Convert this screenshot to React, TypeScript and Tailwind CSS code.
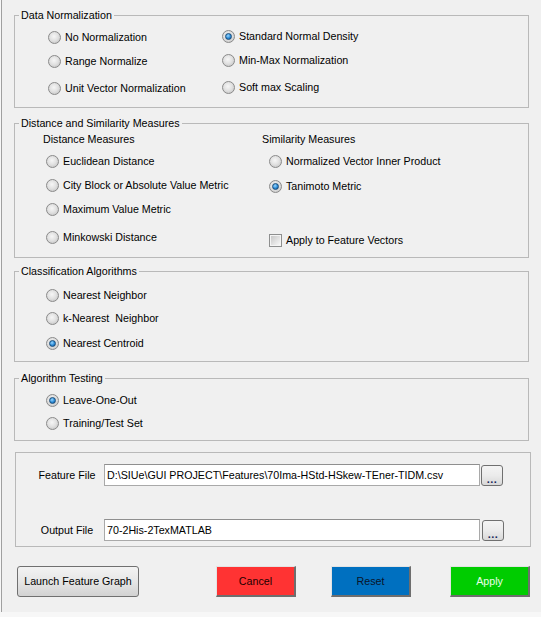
import React from "react";

function Radio({ checked = false }: { checked?: boolean }) {
  return (
    <span className="flex h-[13px] w-[13px] shrink-0 items-center justify-center rounded-full border border-[#8a8a8a] bg-[radial-gradient(circle_at_45%_40%,#f6f6f6,#e2e2e2_45%,#bdbdbd)]">
      {checked && (
        <span className="h-[7px] w-[7px] rounded-full border border-[#1b4d7a] bg-[radial-gradient(circle_at_40%_35%,#9ad7ff,#2a8ad6_55%,#0b4f8f)]" />
      )}
    </span>
  );
}

function Check() {
  return (
    <span className="flex h-[13px] w-[13px] shrink-0 items-center justify-center border border-[#8e8f8f] bg-[#f4f4f4]">
      <span className="h-[9px] w-[9px] bg-gradient-to-br from-[#c8c8c8] to-[#f7f7f7]" />
    </span>
  );
}

function Opt({ label, checked, className = "" }: { label: string; checked?: boolean; className?: string }) {
  return (
    <div className={"flex h-5 items-center gap-1 whitespace-pre " + className}>
      <Radio checked={checked} />
      <span>{label}</span>
    </div>
  );
}

function Legend({ children }: { children: React.ReactNode }) {
  return <legend className="ml-[4px] px-[2px] leading-[13px]">{children}</legend>;
}

function DotsButton() {
  return (
    <button className="ml-px flex h-[21px] w-[22px] items-end justify-center rounded-[3px] border border-[#707070] bg-gradient-to-b from-[#f4f4f4] via-[#ebebeb] to-[#d8d8d8] pb-[3px]">
      <span className="text-[11px] font-bold leading-[6px] tracking-[0.5px] text-[#1a2a5a]">...</span>
    </button>
  );
}

export default function App() {
  return (
    <div className="h-[617px] w-[541px] bg-[#f7f7f7] font-['Liberation_Sans',Arial,sans-serif] text-[10.7px] text-black">
      <div className="ml-px h-[612px] w-[540px] border-l border-[#a0a0a0] bg-[#f0f0f0] pl-[12px] pt-[9px]">
        {/* Data Normalization */}
        <fieldset className="h-[99px] w-[515px] border border-[#b9b9b9]">
          <Legend>Data Normalization</Legend>
          <div className="grid grid-cols-[174px_1fr] pl-[33px]">
            <div className="flex flex-col">
              <Opt label="No Normalization" className="mt-[5px]" />
              <Opt label="Range Normalize" className="mt-1" />
              <Opt label="Unit Vector Normalization" className="mt-[7px]" />
            </div>
            <div className="flex flex-col">
              <Opt label="Standard Normal Density" checked className="mt-[4px]" />
              <Opt label="Min-Max Normalization" className="mt-1" />
              <Opt label="Soft max Scaling" className="mt-[7px]" />
            </div>
          </div>
        </fieldset>

        {/* Distance and Similarity */}
        <fieldset className="mt-[9px] h-[141px] w-[515px] border border-[#b9b9b9]">
          <Legend>Distance and Similarity Measures</Legend>
          <div className="grid grid-cols-[219px_1fr] pl-[28px]">
            <div className="flex flex-col">
              <div className="mt-[2px] flex h-[14px] items-center">Distance Measures</div>
              <div className="flex flex-col pl-[3px]">
                <Opt label="Euclidean Distance" className="mt-[5px]" />
                <Opt label="City Block or Absolute Value Metric" className="mt-1" />
                <Opt label="Maximum Value Metric" className="mt-1" />
                <Opt label="Minkowski Distance" className="mt-2" />
              </div>
            </div>
            <div className="flex flex-col">
              <div className="mt-[2px] flex h-[14px] items-center">Similarity Measures</div>
              <div className="flex flex-col pl-[7px]">
                <Opt label="Normalized Vector Inner Product" className="mt-[5px]" />
                <Opt label="Tanimoto Metric" checked className="mt-[5px]" />
                <div className="mt-[34px] flex h-5 items-center gap-1">
                  <Check />
                  <span>Apply to Feature Vectors</span>
                </div>
              </div>
            </div>
          </div>
        </fieldset>

        {/* Classification */}
        <fieldset className="mt-[7px] h-[97px] w-[515px] border border-[#b9b9b9]">
          <Legend>Classification Algorithms</Legend>
          <div className="flex flex-col pl-[31px]">
            <Opt label="Nearest Neighbor" className="mt-[7px]" />
            <Opt label="k-Nearest  Neighbor" className="mt-[3px]" />
            <Opt label="Nearest Centroid" checked className="mt-[5px]" />
          </div>
        </fieldset>

        {/* Testing */}
        <fieldset className="mt-[10px] h-[69px] w-[515px] border border-[#b9b9b9]">
          <Legend>Algorithm Testing</Legend>
          <div className="flex flex-col pl-[31px]">
            <Opt label="Leave-One-Out" checked className="mt-[5px]" />
            <Opt label="Training/Test Set" className="mt-[3px]" />
          </div>
        </fieldset>

        {/* Files */}
        <div className="ml-px mt-[11px] h-[95px] w-[516px] border border-[#b9b9b9]">
          <div className="mt-[11px] flex items-center">
            <div className="ml-[14px] w-[74px] text-center">Feature File</div>
            <div className="flex h-[22px] w-[376px] items-center border border-[#a9a9a9] border-t-[#8f8f8f] bg-white pl-[2px]">
              D:\SIUe\GUI PROJECT\Features\70Ima-HStd-HSkew-TEner-TIDM.csv
            </div>
            <DotsButton />
          </div>
          <div className="mt-[33px] flex items-center">
            <div className="ml-[14px] w-[74px] text-center">Output File</div>
            <div className="flex h-[22px] w-[376px] items-center border border-[#a9a9a9] border-t-[#8f8f8f] bg-white pl-[2px]">
              70-2His-2TexMATLAB
            </div>
            <div className="ml-px">
              <DotsButton />
            </div>
          </div>
        </div>

        {/* Buttons */}
        <div className="mt-[19px] flex items-start">
          <button className="ml-[3px] h-[31px] w-[122px] rounded-[3px] border border-[#707070] bg-gradient-to-b from-[#f3f3f3] via-[#e6e6e6] to-[#d2d2d2] text-[10.7px]">
            Launch Feature Graph
          </button>
          <button className="ml-[77px] h-[31px] w-[80px] border border-[#e3e3e3] border-b-2 border-r-2 border-b-[#6e6e6e] border-r-[#6e6e6e] bg-[#ff3333] text-[10.7px] text-[#1a0000]">
            Cancel
          </button>
          <button className="ml-[35px] h-[31px] w-[80px] border border-[#e3e3e3] border-b-2 border-r-2 border-b-[#6e6e6e] border-r-[#6e6e6e] bg-[#0070c0] text-[10.7px] text-[#0a1428]">
            Reset
          </button>
          <button className="ml-[39px] h-[31px] w-[80px] border border-[#e3e3e3] border-b-2 border-r-2 border-b-[#6e6e6e] border-r-[#6e6e6e] bg-[#00cc00] text-[10.7px] text-[#e8ffe8]">
            Apply
          </button>
        </div>
      </div>
    </div>
  );
}
